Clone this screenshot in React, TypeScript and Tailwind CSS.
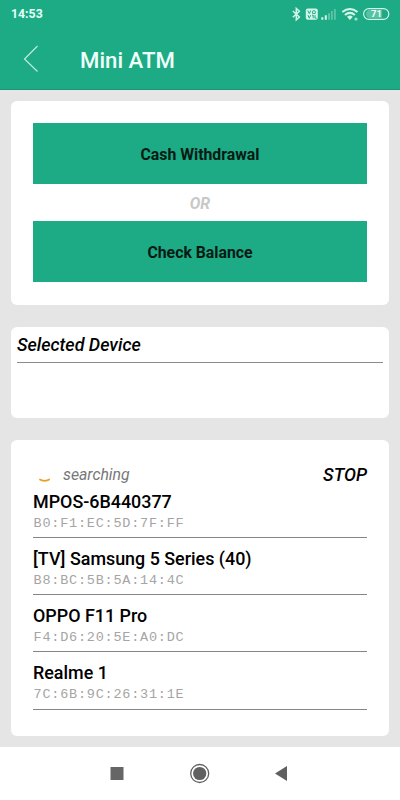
const devices = [
  { name: "MPOS-6B440377", mac: "B0:F1:EC:5D:7F:FF" },
  { name: "[TV] Samsung 5 Series (40)", mac: "B8:BC:5B:5A:14:4C" },
  { name: "OPPO F11 Pro", mac: "F4:D6:20:5E:A0:DC" },
  { name: "Realme 1", mac: "7C:6B:9C:26:31:1E" },
];

function StatusIcons() {
  return (
    <svg width="100" height="16" viewBox="290 6 100 16" fill="none">
      <path d="M292.8 11l6.6 6-3.1 2.8V8.4l3.1 2.8-6.6 6" stroke="#d5f5ea" strokeWidth="1.5" />
      <rect x="305.8" y="8.5" width="12" height="11.3" rx="2" fill="#d5f5ea" />
      <path d="M307.8 10.5l1.5 3 1.5-3M312.5 13.3v-1.8q0-.8 1.4-.8t1.4.8v1.8q0 .3-1.4.3t-1.4-.3M308 15.2l1.3 3 1.3-3M312 15.2h1.2v3M315 15.2v3h1.5" stroke="#1cab84" strokeWidth="1" />
      <path d="M321.3 17.2h2v2.5h-2zM324.8 15.3h2v4.4h-2z" fill="#d5f5ea" />
      <path d="M328 13.2h2v6.5h-2zM331 11h1.8v8.7H331zM334 9h1.8v10.7H334z" fill="#d5f5ea" opacity=".35" />
      <path d="M342.3 12.1q7.6-6.2 15.2 0M344.9 14.9q5-4.1 10 0" stroke="#d5f5ea" strokeWidth="2" />
      <path d="M347 16.8q2.9-2.4 5.8 0l-2.9 3.3z" fill="#d5f5ea" />
      <circle cx="356" cy="19" r="1.6" fill="#a4e2cf" />
      <rect x="363.6" y="8.6" width="25.2" height="10.8" rx="5.4" stroke="#d5f5ea" strokeWidth="1.2" />
      <path d="M370 10h12v8h-12a4 4 0 010-8z" fill="#55c2a4" />
      <text x="376.4" y="17.3" textAnchor="middle" fill="#eefff9" fontSize="9.5" fontWeight="700" fontFamily="Roboto, sans-serif">71</text>
    </svg>
  );
}

export default function App() {
  return (
    <div className="flex h-[800px] w-[400px] flex-col overflow-hidden bg-[#e5e5e5] font-[Roboto,sans-serif] text-black">
      <header className="h-[90px] shrink-0 border-b border-[#159773] bg-[#1cab84]">
        <div className="flex h-7 items-center justify-between pr-[10px] pl-[11px]">
          <span className="pt-px text-[12.3px] font-bold text-[#e6fff7]">14:53</span>
          <StatusIcons />
        </div>
        <div className="flex h-[62px] items-center">
          <svg className="ml-[23px]" width="16" height="28" viewBox="0 0 16 28" fill="none">
            <path d="M14.5 1L1.5 14l13 12.5" stroke="#c1eadd" strokeWidth="1.2" />
          </svg>
          <h1 className="ml-[41px] pt-[3px] text-[22.2px] leading-none font-medium text-[#effffa]">Mini ATM</h1>
        </div>
      </header>

      <main className="flex h-[657px] shrink-0 flex-col gap-[22px] px-[11px] pt-[11px]">
        <section className="h-[204px] shrink-0 rounded-md bg-white px-[22px] pt-[22px]">
          <button className="block h-[61px] w-full bg-[#1cab84] pt-[2px] text-[15.8px] font-bold text-[#071a14]">Cash Withdrawal</button>
          <div className="flex h-[37px] items-center justify-center pt-[2px] text-[15.8px] font-bold text-[#c8c8c8] italic">OR</div>
          <button className="block h-[61px] w-full bg-[#1cab84] pt-[2px] text-[15.8px] font-bold text-[#071a14]">Check Balance</button>
        </section>

        <section className="h-[91px] shrink-0 rounded-md bg-white px-[6px]">
          <h2 className="h-9 border-b border-[#8b8b8b] text-[17.9px] leading-[36px] font-medium italic">Selected Device</h2>
        </section>

        <section className="h-[296px] shrink-0 rounded-md bg-white px-[22px] pt-[22px]">
          <div className="flex h-[26px] items-center">
            <svg width="22" height="24" viewBox="0 0 22 24" fill="none">
              <path d="M6.3 16.3q5.3 3.1 10.5 0" stroke="#e9a01d" strokeWidth="1.8" />
            </svg>
            <span className="ml-[8px] text-[15.8px] text-[#777] italic">searching</span>
            <span className="ml-auto text-[17.9px] font-medium italic">STOP</span>
          </div>
          <ul>
            {devices.map((device) => (
              <li key={device.mac} className="h-[57.2px] border-b border-[#858585] pt-[10px] first:h-[50px] first:pt-[3px]">
                <div className="text-[17.9px] leading-[22px] font-medium whitespace-nowrap">{device.name}</div>
                <div className="pl-[0.5px] font-['Liberation_Mono',monospace] text-[13.5px] leading-[22px] tracking-[0.78px] text-[#a5a5a5]">{device.mac}</div>
              </li>
            ))}
          </ul>
        </section>
      </main>

      <nav className="flex h-[53px] shrink-0 items-center bg-white">
        <svg width="400" height="53" viewBox="0 0 400 53">
          <rect x="110.5" y="20" width="13" height="13" fill="#666" />
          <circle cx="199.7" cy="26.5" r="9" fill="none" stroke="#606060" strokeWidth="1.3" />
          <circle cx="199.7" cy="26.5" r="6.6" fill="#606060" />
          <path d="M275 26.5L287 19v15z" fill="#606060" />
        </svg>
      </nav>
    </div>
  );
}
